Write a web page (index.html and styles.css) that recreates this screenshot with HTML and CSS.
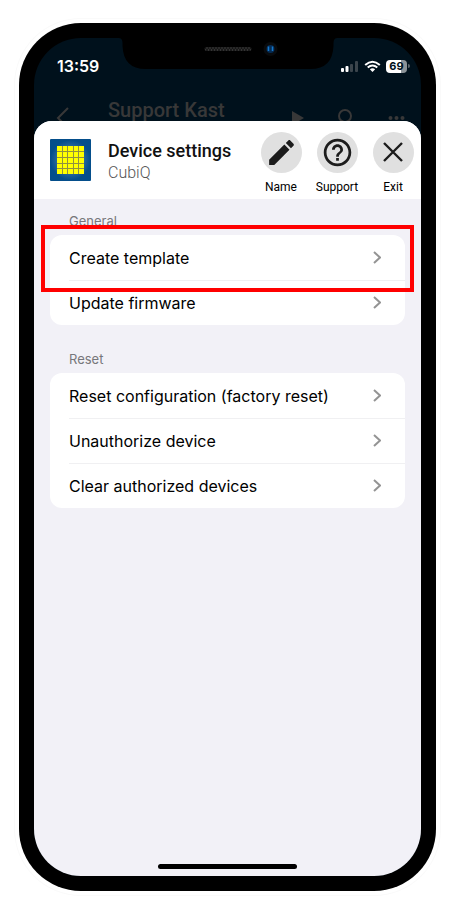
FILE: index.html
```html
<!DOCTYPE html>
<html lang="en">
<head>
  <meta charset="UTF-8">
  <meta name="viewport" content="width=device-width, initial-scale=1.0">
  <title>Device settings</title>
  <link rel="stylesheet" href="styles.css">
</head>
<body>
  <div class="phone">
    <div class="screen">
      <!-- Notch with speaker and camera -->
      <svg class="notch" width="219" height="31" viewBox="0 0 219 31" aria-hidden="true">
        <defs>
          <pattern id="mesh" width="3" height="4" patternUnits="userSpaceOnUse">
            <path d="M0 0L3 4M3 0L0 4" stroke="#555" stroke-width=".7"/>
          </pattern>
        </defs>
        <path d="M0 0Q4 0 4 5V8Q5 31 27 31H192Q214 31 215 8V5Q215 0 219 0Z" fill="#000"/>
        <rect x="86" y="9" width="47" height="4" rx="2" fill="url(#mesh)"/>
        <circle cx="152" cy="11" r="7" fill="#090b0d"/>
        <circle cx="152" cy="11" r="4" fill="#062b52"/>
        <path d="M150 8.500V13M154 8.500V13" stroke="#1478cc" stroke-width="1.500"/>
      </svg>

      <div class="status-bar">
        <span class="time">13:59</span>
        <div class="status-icons">
          <svg width="19" height="13" viewBox="0 0 19 13" aria-hidden="true">
            <rect x="1" y="8" width="3" height="4" rx="1" fill="#fff"/>
            <rect x="5.500" y="6" width="3" height="6" rx="1" fill="#fff"/>
            <rect x="10" y="4" width="3" height="8" rx="1" fill="#3b454c"/>
            <rect x="15" y="1" width="3" height="11" rx="1" fill="#3b454c"/>
          </svg>
          <svg width="17" height="13" viewBox="0 0 17 13" aria-hidden="true">
            <g fill="none" stroke="#fff" stroke-width="2">
              <path d="M1.200 5Q8.500 -1.600 15.800 5"/>
              <path d="M3.700 7.600Q8.500 3.400 13.300 7.600"/>
            </g>
            <path d="M5.800 9.300Q8.500 7.200 11.200 9.300L8.500 12Z" fill="#fff"/>
          </svg>
          <div class="battery"><span>69</span></div>
        </div>
      </div>

      <div class="nav-bar">
        <svg class="nav-back" width="14" height="24" viewBox="0 0 14 24" aria-hidden="true">
          <path d="M12 2L2 12L12 22" fill="none" stroke="currentColor" stroke-width="2"/>
        </svg>
        <span class="nav-title">Support Kast</span>
        <svg width="12" height="16" viewBox="0 0 12 16" aria-hidden="true">
          <path d="M0 1L12 8L0 15Z" fill="currentColor"/>
        </svg>
        <svg width="16" height="18" viewBox="0 0 16 18" aria-hidden="true">
          <path d="M11 12L15 17" stroke="currentColor" stroke-width="2"/>
          <circle cx="7" cy="7" r="6" fill="none" stroke="currentColor" stroke-width="2"/>
        </svg>
        <svg width="17" height="6" viewBox="0 0 17 6" fill="currentColor" aria-hidden="true">
          <circle cx="2.500" cy="3" r="2"/>
          <circle cx="8.500" cy="3" r="2"/>
          <circle cx="14.500" cy="3" r="2"/>
        </svg>
      </div>

      <div class="sheet">
        <header class="sheet-header">
          <svg class="device-icon" width="41" height="42" viewBox="0 0 41 42" aria-hidden="true">
            <defs>
              <radialGradient id="glow">
                <stop offset="0" stop-color="#8bb0c8"/>
                <stop offset=".6" stop-color="#2e6c9e"/>
                <stop offset="1" stop-color="#044e8b"/>
              </radialGradient>
            </defs>
            <rect width="41" height="42" rx="1" fill="#044e8b"/>
            <circle cx="20.500" cy="21" r="20" fill="url(#glow)"/>
            <rect x="7" y="7" width="27" height="28" fill="#ff0"/>
            <path d="M12.500 7V35M17.500 7V35M23.500 7V35M28.500 7V35M7 12.500H34M7 18.500H34M7 24.500H34M7 29.500H34" stroke="#8f9040" stroke-width="1"/>
          </svg>
          <div class="heading">
            <h1>Device settings</h1>
            <p>CubiQ</p>
          </div>
          <div class="actions">
            <button type="button" class="action">
              <span class="action-icon">
                <svg width="33" height="33" viewBox="0 0 24 24" aria-hidden="true">
                  <path fill="currentColor" d="M3 17.250V21h3.750L17.810 9.940l-3.750-3.750L3 17.250zM20.710 7.040c.39-.39.39-1.020 0-1.410l-2.340-2.340c-.39-.39-1.020-.39-1.410 0l-1.830 1.830 3.750 3.750 1.830-1.830z"/>
                </svg>
              </span>
              Name
            </button>
            <button type="button" class="action">
              <span class="action-icon">
                <svg width="33" height="33" viewBox="0 0 24 24" aria-hidden="true">
                  <path fill="currentColor" d="M11 18h2v-2h-2v2zm1-16C6.480 2 2 6.480 2 12s4.480 10 10 10 10-4.480 10-10S17.520 2 12 2zm0 18c-4.410 0-8-3.590-8-8s3.590-8 8-8 8 3.590 8 8-3.590 8-8 8zm0-14c-2.210 0-4 1.790-4 4h2c0-1.100.9-2 2-2s2 .9 2 2c0 2-3 1.750-3 5h2c0-2.250 3-2.500 3-5 0-2.210-1.790-4-4-4z"/>
                </svg>
              </span>
              Support
            </button>
            <button type="button" class="action">
              <span class="action-icon">
                <svg width="20" height="20" viewBox="0 0 20 20" aria-hidden="true">
                  <path d="M1 1L19 19M19 1L1 19" stroke="currentColor" stroke-width="2.400"/>
                </svg>
              </span>
              Exit
            </button>
          </div>
        </header>

        <main>
          <section>
            <h2>General</h2>
            <ul class="card">
              <li class="highlight">
                <button type="button" class="row">Create template
                  <svg width="8" height="13" viewBox="0 0 8 13" aria-hidden="true"><path d="M1 1L7 6.500L1 12"/></svg>
                </button>
              </li>
              <li>
                <button type="button" class="row">Update firmware
                  <svg width="8" height="13" viewBox="0 0 8 13" aria-hidden="true"><path d="M1 1L7 6.500L1 12"/></svg>
                </button>
              </li>
            </ul>
          </section>
          <section>
            <h2>Reset</h2>
            <ul class="card">
              <li>
                <button type="button" class="row">Reset configuration (factory reset)
                  <svg width="8" height="13" viewBox="0 0 8 13" aria-hidden="true"><path d="M1 1L7 6.500L1 12"/></svg>
                </button>
              </li>
              <li>
                <button type="button" class="row">Unauthorize device
                  <svg width="8" height="13" viewBox="0 0 8 13" aria-hidden="true"><path d="M1 1L7 6.500L1 12"/></svg>
                </button>
              </li>
              <li>
                <button type="button" class="row">Clear authorized devices
                  <svg width="8" height="13" viewBox="0 0 8 13" aria-hidden="true"><path d="M1 1L7 6.500L1 12"/></svg>
                </button>
              </li>
            </ul>
          </section>
        </main>
        <div class="home-indicator"></div>
      </div>
    </div>
  </div>
</body>
</html>
```
FILE: styles.css
```css
* {
  box-sizing: border-box;
}

body {
  display: flex;
  min-height: 100vh;
  margin: 0;
  padding: 23px 21px 23px 19px;
  background: #fff;
  color: #111;
  font-family: Inter, "Liberation Sans", sans-serif;
}

h1,
h2,
p,
ul {
  margin: 0;
  padding: 0;
}

button {
  padding: 0;
  border: none;
  background: none;
  color: #000;
  font-family: inherit;
  cursor: pointer;
}

svg {
  flex: none;
}

/* Phone frame */
.phone {
  display: flex;
  flex: 1;
  padding: 15px;
  border-radius: 62px;
  background: #000;
  box-shadow: 0 0 0 4px #fff, 0 0 0 5px #fafafa;
}

.screen {
  position: relative;
  display: flex;
  flex: 1;
  flex-direction: column;
  min-width: 0;
  overflow: hidden;
  border-radius: 47px;
  background: #00111c;
}

.notch {
  position: absolute;
  top: 0;
  left: 50%;
  transform: translateX(-50%);
}

.status-bar {
  display: flex;
  justify-content: space-between;
  align-items: center;
  height: 56px;
  padding: 0 11px 0 23px;
  color: #fff;
}

.time {
  font-size: 16px;
  font-weight: 600;
}

.status-icons {
  display: flex;
  align-items: center;
  gap: 5px;
}

.battery {
  display: flex;
  align-items: center;
}

.battery span {
  width: 21px;
  border-radius: 4px;
  background: linear-gradient(to right, #fff 70%, #8b9297 70%);
  color: #00111c;
  font-size: 11px;
  font-weight: 700;
  line-height: 13px;
  text-align: center;
}

.battery::after {
  content: "";
  width: 2px;
  height: 4px;
  margin-left: 1px;
  border-radius: 0 2px 2px 0;
  background: #596269;
}

.nav-bar {
  display: flex;
  align-items: center;
  gap: 34px;
  height: 48px;
  padding: 0 16px 0 22px;
  color: #383838;
}

.nav-title {
  flex: 1;
  align-self: flex-start;
  margin-left: 4px;
  font-family: Roboto, sans-serif;
  font-size: 20px;
  font-weight: 500;
  line-height: 32px;
}

/* Settings sheet */
.sheet {
  position: relative;
  display: flex;
  flex: 1;
  flex-direction: column;
  margin-top: -21px;
  overflow: hidden;
  border-radius: 18px 18px 0 0;
  background: #f2f1f7;
}

.sheet-header {
  display: flex;
  align-items: center;
  height: 78px;
  padding: 0 6px 0 16px;
  background: #fff;
  font-family: Roboto, sans-serif;
}

.heading {
  flex: 1;
  padding-top: 4px;
  margin-left: 17px;
}

.heading h1 {
  font-size: 18px;
  font-weight: 500;
  line-height: 22px;
  white-space: nowrap;
}

.heading p {
  color: #555;
  font-size: 16px;
  font-weight: 300;
  line-height: 22px;
}

.actions {
  display: flex;
  gap: 12px;
  padding-top: 6px;
}

.action {
  display: flex;
  flex-direction: column;
  align-items: center;
  gap: 6px;
  width: 44px;
  font-size: 12px;
  line-height: 16px;
}

.action-icon {
  display: flex;
  justify-content: center;
  align-items: center;
  width: 41px;
  height: 41px;
  border-radius: 50%;
  background: #e0e0e0;
  color: #1c1c1c;
}

main {
  display: flex;
  flex-direction: column;
  gap: 26px;
  padding: 14px 16px;
}

h2 {
  padding: 0 19px 6px;
  color: #77777b;
  font-size: 13px;
  font-weight: 400;
  line-height: 16px;
}

.card {
  border-radius: 12px;
  background: #fff;
  list-style: none;
}

.row {
  display: flex;
  justify-content: space-between;
  align-items: center;
  width: 100%;
  height: 45px;
  padding: 0 24px 0 19px;
  font-size: 16px;
  text-align: left;
}

.row path {
  fill: none;
  stroke: #949494;
  stroke-width: 2;
}

li + li::before {
  content: "";
  display: block;
  height: 1px;
  margin: 0 0 -1px 19px;
  background: #f0f0f2;
}

.highlight {
  position: relative;
}

.highlight::after {
  content: "";
  position: absolute;
  inset: -10px -9px -12px;
  border: 4px solid #f00;
  pointer-events: none;
}

.home-indicator {
  width: 139px;
  height: 5px;
  margin: auto auto 7px;
  border-radius: 3px;
  background: #000;
}
```
